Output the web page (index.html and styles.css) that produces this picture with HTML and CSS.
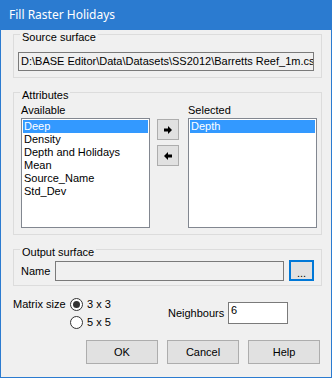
FILE: index.html
```html
<!DOCTYPE html>
<html lang="en">
  <head>
    <meta charset="UTF-8" />
    <meta name="viewport" content="width=device-width, initial-scale=1.0" />
    <title>Fill Raster Holidays</title>
    <link rel="stylesheet" href="styles.css">
  </head>
  <body>
    <div class="window">
      <div class="titlebar">Fill Raster Holidays</div>

      <fieldset class="group group-source">
        <legend>Source surface</legend>
        <div class="source-body">
          <div class="textbox readonly">D:\BASE Editor\Data\Datasets\SS2012\Barretts Reef_1m.csv</div>
        </div>
      </fieldset>

      <fieldset class="group group-attrs">
        <legend>Attributes</legend>
        <div class="attrs-body">
          <div class="attr-col">
            <div class="caption">Available</div>
            <ul class="listbox">
              <li class="selected">Deep</li>
              <li>Density</li>
              <li>Depth and Holidays</li>
              <li>Mean</li>
              <li>Source_Name</li>
              <li>Std_Dev</li>
            </ul>
          </div>
          <div class="move-buttons">
            <button class="move">
              <svg width="8" height="8" viewBox="0 0 8 8"><polygon points="0,2.5 4,2.5 4,0 8,4 4,8 4,5.5 0,5.5" fill="#000"/></svg>
            </button>
            <button class="move">
              <svg width="8" height="8" viewBox="0 0 8 8"><polygon points="8,2.5 4,2.5 4,0 0,4 4,8 4,5.5 8,5.5" fill="#000"/></svg>
            </button>
          </div>
          <div class="attr-col">
            <div class="caption">Selected</div>
            <ul class="listbox">
              <li class="selected">Depth</li>
            </ul>
          </div>
        </div>
      </fieldset>

      <fieldset class="group group-output">
        <legend>Output surface</legend>
        <div class="output-body">
          <span class="name-label">Name</span>
          <div class="textbox name-field"></div>
          <button class="browse">...</button>
        </div>
      </fieldset>

      <div class="options">
        <span class="matrix-label">Matrix size</span>
        <div class="radios">
          <label class="radio checked"><span class="dot"></span>3 x 3</label>
          <label class="radio"><span class="dot"></span>5 x 5</label>
        </div>
        <span class="neigh-label">Neighbours</span>
        <div class="textbox neigh-field">6</div>
      </div>

      <div class="actions">
        <button class="btn">OK</button>
        <button class="btn">Cancel</button>
        <button class="btn">Help</button>
      </div>
    </div>
  </body>
</html>
```

FILE: styles.css
```css
* {
  box-sizing: border-box;
}

body {
  margin: 0;
  font-family: "Liberation Sans", Arial, sans-serif;
  font-size: 11px;
  color: #000;
}

.window {
  width: 332px;
  height: 378px;
  background-color: #f0f0f0;
  border: 1px solid #2b7bd0;
  border-top: none;
}

.titlebar {
  height: 30px;
  line-height: 30px;
  padding-left: 8px;
  background-color: #2b7bd0;
  color: #fff;
  font-family: "Noto Sans", "Open Sans", sans-serif;
  font-size: 12px;
}

.group {
  margin: 1px 9px 0 12px;
  padding: 0;
  min-width: 0;
  border: 1px solid #dcdcdc;
}

.group legend {
  margin-left: 6px;
  padding: 0 2px;
  height: 6px;
  line-height: 13px;
}

.group-attrs,
.group-output {
  margin-top: 11px;
}

.textbox {
  height: 19px;
  padding: 2px 2px;
  line-height: 13px;
  background-color: #fff;
  border: 1px solid #7a7a7a;
  white-space: nowrap;
  overflow: hidden;
}

.readonly {
  background-color: #f0f0f0;
}

.source-body {
  padding: 15px 7px 6px 4px;
}

.attrs-body {
  display: flex;
  padding: 9px 4px 6px 7px;
}

.attr-col {
  width: 129px;
}

.caption {
  height: 14px;
  line-height: 13px;
}

.listbox {
  list-style: none;
  margin: 0;
  padding: 1px;
  height: 110px;
  background-color: #fff;
  border: 1px solid #828790;
}

.listbox li {
  height: 13px;
  line-height: 13px;
  padding-left: 1px;
}

.listbox li.selected {
  background-color: #3399ff;
  color: #fff;
}

.move-buttons {
  display: flex;
  flex-direction: column;
  gap: 5px;
  margin: 15px 9px 0 7px;
}

button {
  font-family: "Liberation Sans", Arial, sans-serif;
  font-size: 11px;
  color: #000;
  background-color: #e1e1e1;
  border: 1px solid #adadad;
  padding: 0;
}

.move {
  width: 22px;
  height: 21px;
  display: flex;
  align-items: center;
  justify-content: center;
}

.output-body {
  display: flex;
  align-items: center;
  padding: 8px 7px 4px 7px;
}

.name-label {
  width: 34px;
}

.name-field {
  width: 229px;
  height: 20px;
  background-color: #f0f0f0;
}

.browse {
  width: 25px;
  height: 21px;
  margin-left: 5px;
  border: 2px solid #0078d7;
  line-height: 22px;
}

.options {
  display: flex;
  align-items: center;
  margin-top: 9px;
  padding-left: 12px;
}

.matrix-label {
  align-self: flex-start;
  width: 57px;
  line-height: 18px;
}

.radios {
  width: 98px;
  display: flex;
  flex-direction: column;
}

.radio {
  display: flex;
  align-items: center;
  height: 18px;
  gap: 4px;
}

.radio .dot {
  width: 13px;
  height: 13px;
  border-radius: 50%;
  border: 1px solid #333;
  background-color: #fff;
  display: flex;
  align-items: center;
  justify-content: center;
}

.radio.checked .dot::after {
  content: "";
  width: 7px;
  height: 7px;
  border-radius: 50%;
  background-color: #333;
}

.neigh-label {
  width: 60px;
}

.neigh-field {
  width: 60px;
  height: 22px;
  padding: 1px 2px;
}

.actions {
  display: flex;
  justify-content: flex-end;
  gap: 9px;
  margin-top: 9px;
  padding-right: 11px;
}

.btn {
  width: 72px;
  height: 24px;
}
```
